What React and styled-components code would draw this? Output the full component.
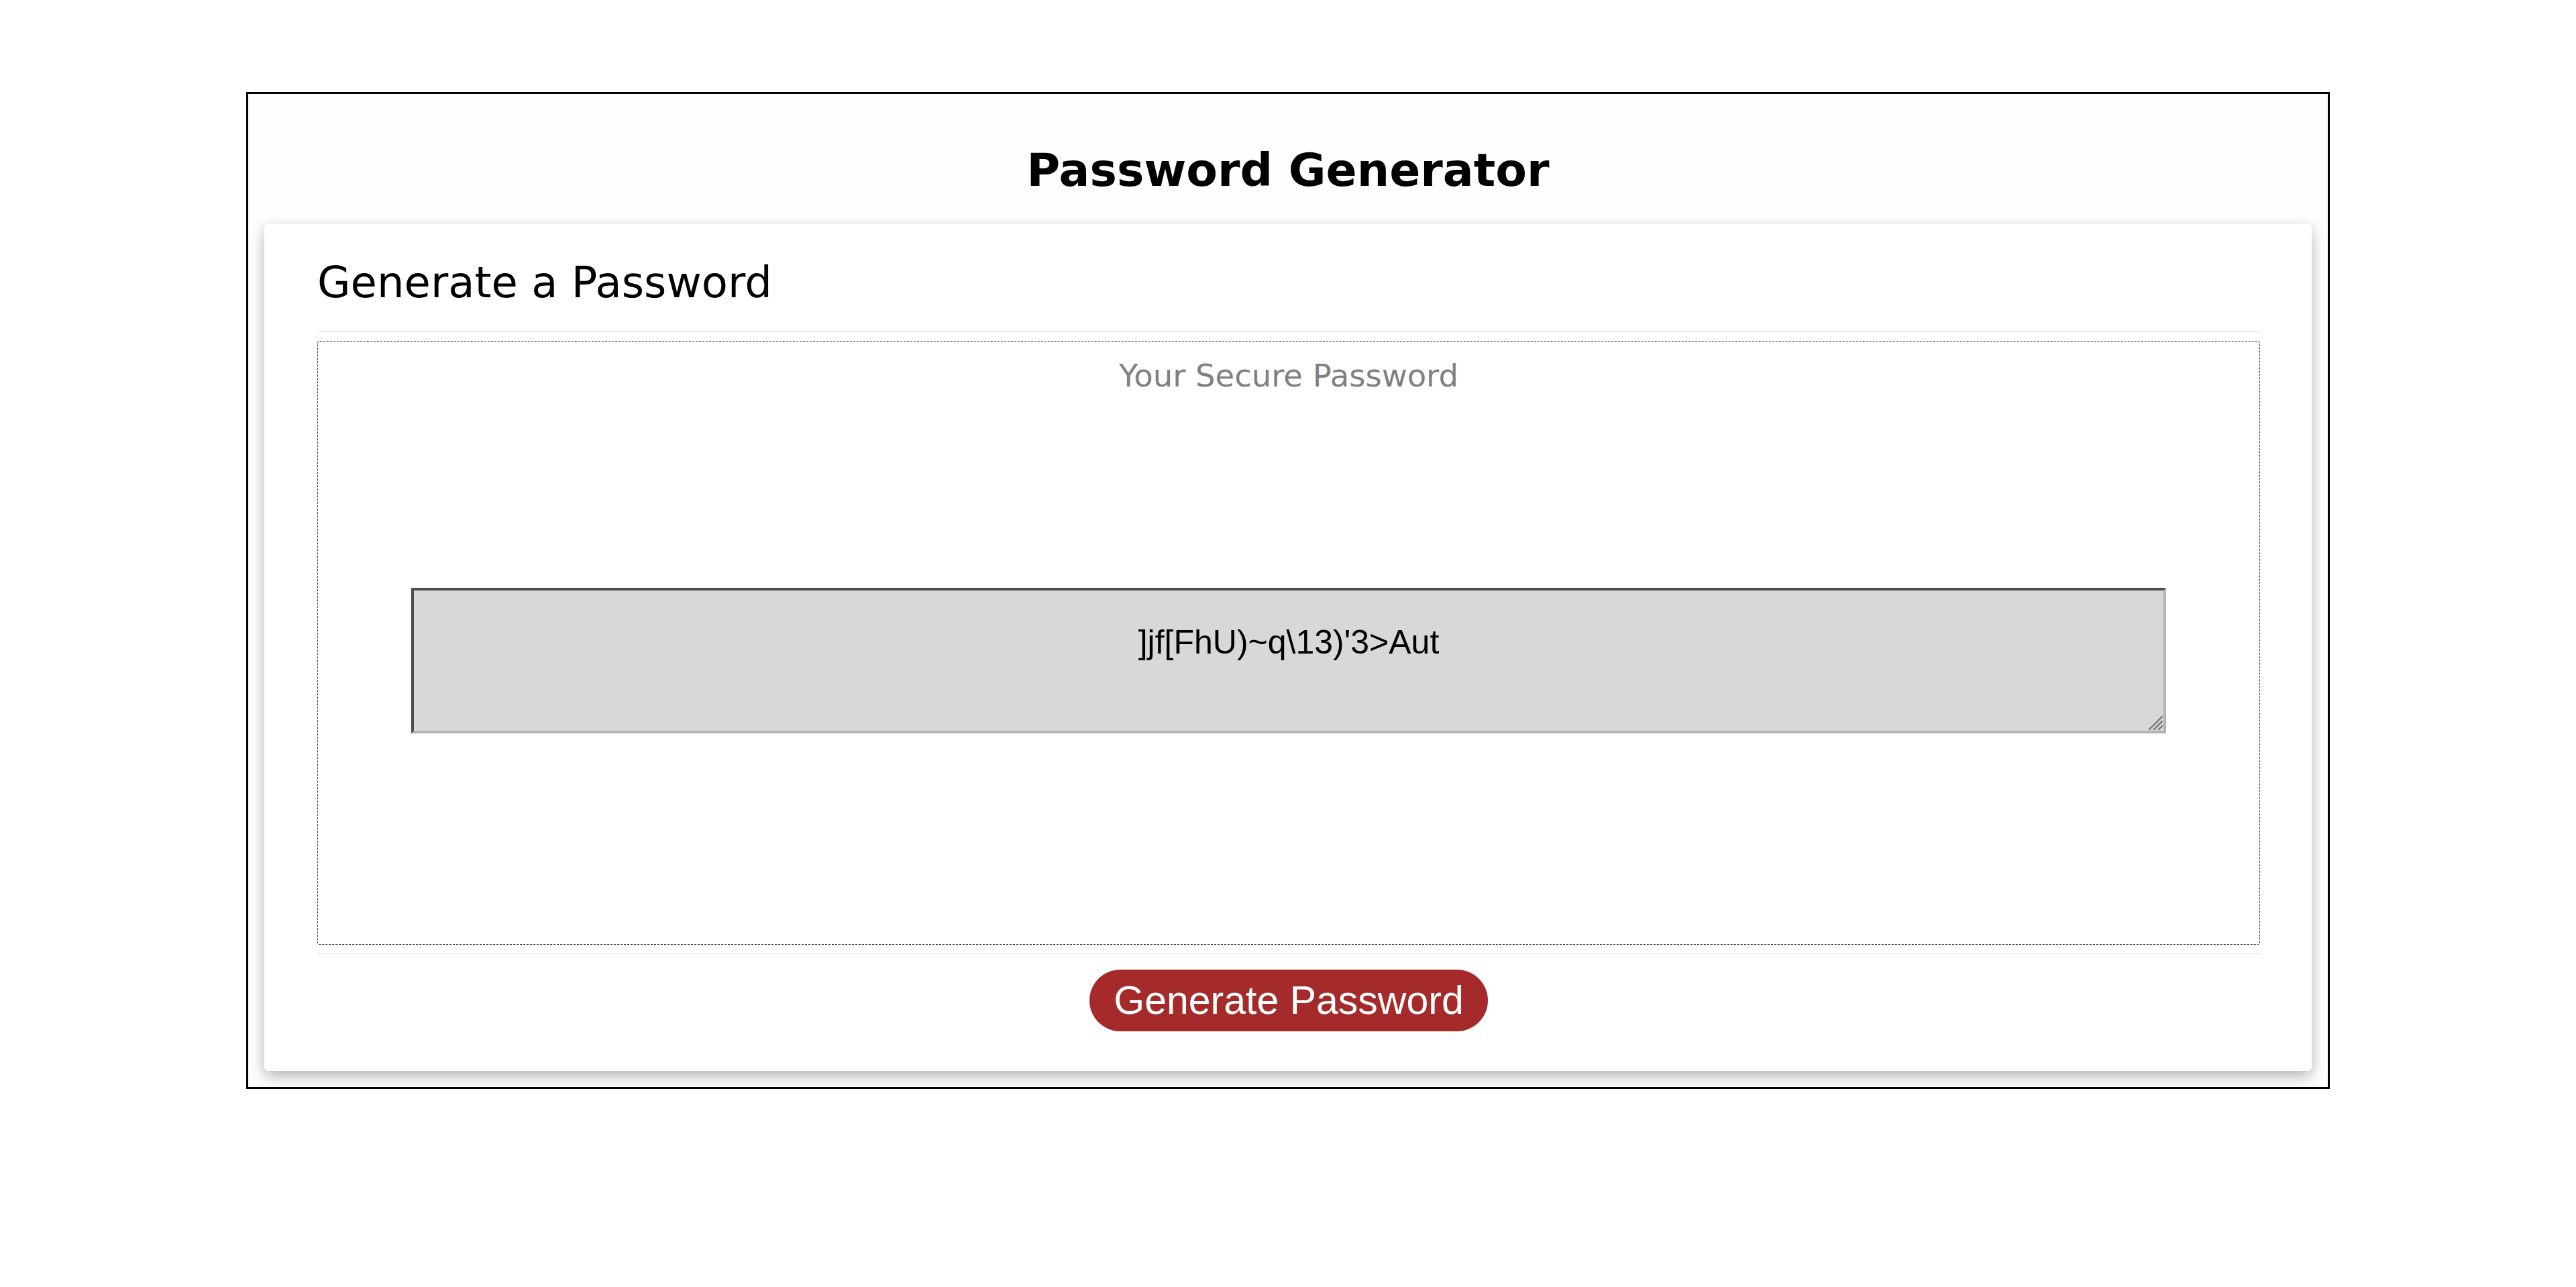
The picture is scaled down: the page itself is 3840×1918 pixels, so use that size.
import React from "react";
import styled, { createGlobalStyle } from "styled-components";

const GlobalStyle = createGlobalStyle`
  *, *::before, *::after { box-sizing: border-box; }
  html, body { margin: 0; padding: 0; background: #ffffff; }
  body { font-family: "DejaVu Sans", Verdana, sans-serif; color: #000; }
`;

const Frame = styled.div`
  width: 3106px;
  margin: 137px auto 0;
  border: 3px solid #000;
  background: #fefefe;
  padding: 0 24px 24px;
`;

const Header = styled.header`
  text-align: center;
  padding: 74px 0 41px;
`;

const Title = styled.h1`
  margin: 0;
  font-family: "DejaVu Sans", Verdana, sans-serif;
  font-weight: bold;
  font-size: 68px;
  line-height: normal;
  color: #000;
`;

const Card = styled.section`
  background: #ffffff;
  border-radius: 6px;
  box-shadow: 0 8px 22px rgba(0, 0, 0, 0.3);
  padding: 50px 77px 59px 79px;
`;

const CardTitle = styled.h2`
  margin: 0 0 36px;
  font-family: "DejaVu Sans", Verdana, sans-serif;
  font-weight: normal;
  font-size: 64px;
  line-height: normal;
  color: #000;
`;

const Rule = styled.div`
  height: 1px;
  margin: ${(p) => (p.$bottom ? "0 0 1px" : "1px 0 0")};
  background: #dadada;
`;

const CardBody = styled.div`
  padding: 13px 0 12px;
`;

const Output = styled.div`
  height: 900px;
  border: 1px dashed #333;
  border-radius: 4px;
  display: flex;
  flex-direction: column;
  align-items: center;
  padding-top: 24px;
`;

const Label = styled.div`
  font-family: "DejaVu Sans", Verdana, sans-serif;
  font-size: 46.5px;
  line-height: normal;
  color: #808080;
`;

const BoxWrap = styled.div`
  position: relative;
  margin-top: 289px;
  width: 2616px;
  height: 217px;
`;

const PasswordBox = styled.textarea`
  display: block;
  width: 100%;
  height: 100%;
  border-style: solid;
  border-width: 4px;
  border-color: #4d4d4d #b3b3b3 #b3b3b3 #4d4d4d;
  background: #d9d8d9;
  font-family: "Liberation Sans", Arial, sans-serif;
  font-size: 50px;
  line-height: normal;
  color: #000;
  text-align: center;
  padding: 48px 20px 0;
  resize: none;
  overflow: hidden;
  outline: none;
`;

const Grip = styled.svg`
  position: absolute;
  right: 4px;
  bottom: 4px;
  width: 24px;
  height: 24px;
`;

const Footer = styled.div`
  display: flex;
  justify-content: center;
  padding-top: 23px;
`;

const GenerateButton = styled.button`
  border: none;
  background: #a52a2a;
  color: #fff;
  font-family: "Liberation Sans", Arial, sans-serif;
  font-size: 59px;
  line-height: normal;
  padding: 12px 36px 12px;
  border-radius: 60px;
  cursor: pointer;
`;

export default function App() {
  return (
    <>
      <GlobalStyle />
      <Frame>
        <Header>
          <Title>Password Generator</Title>
        </Header>
        <Card>
          <CardTitle>Generate a Password</CardTitle>
          <Rule />
          <CardBody>
            <Output>
              <Label>Your Secure Password</Label>
              <BoxWrap>
                <PasswordBox readOnly value={"]jf[FhU)~q\\13)'3>Aut"} />
                <Grip viewBox="0 0 24 24" aria-hidden="true">
                  <g stroke="#6e6e6e" strokeWidth="2" strokeLinecap="square">
                    <line x1="3" y1="22" x2="22" y2="3" />
                    <line x1="10" y1="22" x2="22" y2="10" />
                    <line x1="17" y1="22" x2="22" y2="17" />
                  </g>
                  <g stroke="#c8c8c8" strokeWidth="1">
                    <line x1="5" y1="22.5" x2="22.5" y2="5" />
                    <line x1="12" y1="22.5" x2="22.5" y2="12" />
                  </g>
                </Grip>
              </BoxWrap>
            </Output>
          </CardBody>
          <Rule $bottom />
          <Footer>
            <GenerateButton type="button">Generate Password</GenerateButton>
          </Footer>
        </Card>
      </Frame>
    </>
  );
}
